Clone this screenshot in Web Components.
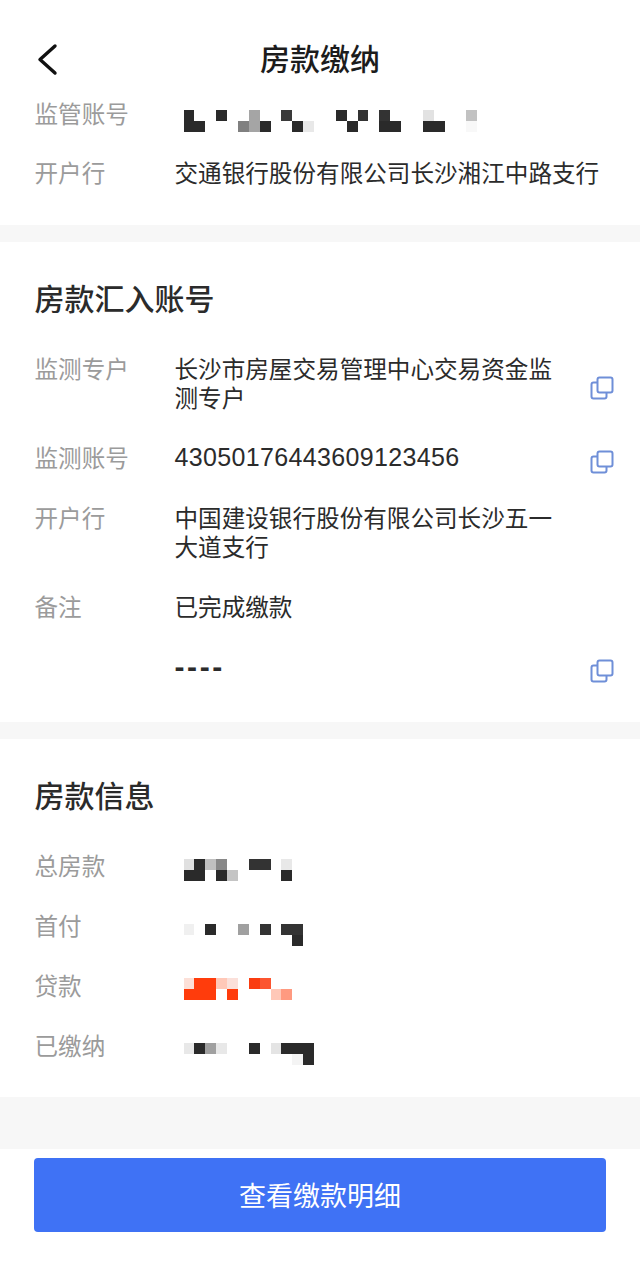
<!DOCTYPE html>
<html lang="zh">
<head>
<meta charset="utf-8">
<title>房款缴纳</title>
<style>
  html, body { margin: 0; background: #fff; }
  body {
    width: 640px;
    height: 1266px;
    overflow: hidden;
    font-family: "Noto Sans CJK SC", "Noto Sans", sans-serif;
    color: #2b2b2b;
  }
  .num { display: block; font: 25px/29px "Liberation Sans", sans-serif; letter-spacing: .35px; }
  .dashes { display: block; font: 700 30px/29px "Liberation Sans", sans-serif; letter-spacing: 2.6px; }
</style>
</head>
<body>
<pay-page>
  <nav-bar title="房款缴纳"></nav-bar>
  <info-section class="first">
    <info-row label="监管账号"><pixel-block data="0" offset="11.5"></pixel-block></info-row>
    <info-row label="开户行">交通银行股份有限公司长沙湘江中路支行</info-row>
  </info-section>
  <info-section heading="房款汇入账号">
    <info-row label="监测专户" copy>长沙市房屋交易管理中心交易资金监测专户</info-row>
    <info-row label="监测账号" copy><span class="num">43050176443609123456</span></info-row>
    <info-row label="开户行" narrow>中国建设银行股份有限公司长沙五一大道支行</info-row>
    <info-row label="备注">已完成缴款</info-row>
    <info-row copy><span class="dashes">----</span></info-row>
  </info-section>
  <info-section class="last" heading="房款信息">
    <info-row label="总房款"><pixel-block data="1" offset="8.5"></pixel-block></info-row>
    <info-row label="首付"><pixel-block data="2" offset="13.5"></pixel-block></info-row>
    <info-row label="贷款"><pixel-block data="3" offset="7.5"></pixel-block></info-row>
    <info-row label="已缴纳"><pixel-block data="4" offset="12.5"></pixel-block></info-row>
  </info-section>
  <pay-footer>查看缴款明细</pay-footer>
</pay-page>

<script>
// redacted values in the reference: [column, row, colour] on an 11px grid
const K = '#2a2a2a', R = '#ff3c0c';
const MOSAICS = [
  [[0,0,K],[0,1,K],[1,1,K],[3,0,K],[5,1,'#808080'],[6,0,'#a5a5a5'],[6,1,'#a5a5a5'],[7,1,K],
   [9,0,'#3a3a3a'],[10,1,K],[11,1,'#e8e8e8'],[14,0,K],[15,1,K],[16,0,'#333'],
   [18,0,'#333'],[18,1,K],[19,1,K],[22,0,'#e2e2e2'],[22,1,K],[23,1,K],[26,0,'#c2c2c2'],[26,1,'#f8f8f8']],
  [[0,0,'#e0e0e0'],[1,0,K],[2,0,'#c0c0c0'],[3,0,'#888'],[6,0,'#333'],[7,0,'#333'],[9,0,'#e8e8e8'],
   [0,1,K],[1,1,K],[3,1,K],[4,1,'#c4c4c4'],[9,1,K]],
  [[0,0,'#f0f0f0'],[2,0,K],[5,0,'#a0a0a0'],[7,0,'#333'],[9,0,'#333'],[10,0,'#333'],[10,1,K]],
  [[0,0,'#fce0d8'],[1,0,R],[2,0,R],[3,0,'#ffc8b8'],[4,0,'#fbe0da'],[6,0,'#fa3c10'],[7,0,'#fc5530'],
   [0,1,R],[1,1,R],[2,1,R],[4,1,R],[8,1,'#ffc8b8'],[9,1,'#ff9a80']],
  [[0,0,'#e8e8e8'],[1,0,K],[2,0,'#a0a0a0'],[3,0,'#e8e8e8'],[6,0,K],[8,0,'#e4e4e4'],[9,0,K],[10,0,K],[11,0,K],
   [10,1,'#f4f4f4'],[11,1,K]]
];

class PayPage extends HTMLElement {
  connectedCallback() {
    this.attachShadow({ mode: 'open' }).innerHTML = `
      <style>
        :host { display: flex; flex-direction: column; height: 1266px; }
        ::slotted(*) { flex: none; }
      </style>
      <slot></slot>`;
  }
}

class NavBar extends HTMLElement {
  connectedCallback() {
    this.attachShadow({ mode: 'open' }).innerHTML = `
      <style>
        :host { display: block; position: relative; height: 98.5px; box-sizing: border-box; padding-top: 36px; }
        h1 { margin: 0; font-size: 30px; line-height: 42px; font-weight: 500; text-align: center; color: #1c1c1c; }
        svg { position: absolute; left: 35px; top: 42px; }
      </style>
      <svg width="26" height="34" viewBox="0 0 26 34" fill="none" stroke="#111" stroke-width="3.4" stroke-linecap="round" stroke-linejoin="round">
        <path d="M20 4 5 17.5 20 31"/>
      </svg>
      <h1>${this.getAttribute('title')}</h1>`;
  }
}

class InfoSection extends HTMLElement {
  connectedCallback() {
    const heading = this.getAttribute('heading');
    this.attachShadow({ mode: 'open' }).innerHTML = `
      <style>
        :host { display: flex; flex-direction: column; gap: 31px; padding: 33.5px 26px 41.5px 34.5px; background: #fff; border-bottom: 17px solid #f7f7f7; }
        :host(.first) { gap: 30px; padding-top: 0; padding-bottom: 38.6px; }
        :host(.last) { padding-bottom: 37px; border-bottom-width: 52px; }
        h2 { margin: 0 0 5px; font-size: 30px; line-height: 42px; font-weight: 500; color: #2b2b2b; }
      </style>
      ${heading ? `<h2>${heading}</h2>` : ''}
      <slot></slot>`;
  }
}

const rowTemplate = document.createElement('template');
rowTemplate.innerHTML = `
<style>
  :host { display: flex; align-items: center; font-size: 23.6px; line-height: 29px; }
  :host([narrow]) .value { flex: none; width: 385px; }
  .label { flex: none; width: 140px; align-self: flex-start; color: #9b9b9b; }
  .value { flex: 1; min-width: 0; color: #2b2b2b; }
  svg { flex: none; margin: 5px 0 -5px 36px; }
</style>
<span class="label"></span>
<div class="value"><slot></slot></div>`;

class InfoRow extends HTMLElement {
  connectedCallback() {
    const root = this.attachShadow({ mode: 'open' });
    root.appendChild(rowTemplate.content.cloneNode(true));
    root.querySelector('.label').textContent = this.getAttribute('label') || '';
    if (this.hasAttribute('copy')) {
      root.appendChild(document.querySelector('#copy-icon').content.cloneNode(true));
    }
  }
}

class PixelBlock extends HTMLElement {
  connectedCallback() {
    const cells = MOSAICS[+this.getAttribute('data')];
    const html = cells.map(([c, r, color]) =>
      `<i style="grid-column:${c + 1};grid-row:${r + 1};background:${color}"></i>`).join('');
    this.attachShadow({ mode: 'open' }).innerHTML = `
      <style>
        :host { display: flow-root; height: 29px; margin-left: 9px; }
        div {
          display: grid; grid-auto-columns: 10.88px; grid-template-rows: 11px 11px;
          margin-top: ${this.getAttribute('offset')}px; filter: blur(.4px);
        }
      </style>
      <div>${html}</div>`;
  }
}

class PayFooter extends HTMLElement {
  connectedCallback() {
    this.attachShadow({ mode: 'open' }).innerHTML = `
      <style>
        :host { display: block; padding: 9px 34px 0; }
        button {
          display: block; width: 100%; height: 74px; border: 0; border-radius: 4px;
          background: #3f72f5; color: #fff; font: 400 27px "Noto Sans CJK SC", sans-serif;
        }
      </style>
      <button><slot></slot></button>`;
  }
}

const icon = document.createElement('template');
icon.id = 'copy-icon';
icon.innerHTML = `
<svg width="24" height="24" viewBox="0 0 24 24" fill="none" stroke="#6f8fd8" stroke-width="2" stroke-linejoin="round">
  <rect x="7.5" y="1.5" width="15" height="15" rx="2"/>
  <path d="M7.5 6.5H3.5a2 2 0 0 0-2 2v12a2 2 0 0 0 2 2h11a2 2 0 0 0 2-2v-4"/>
</svg>`;
document.head.appendChild(icon);

customElements.define('pay-page', PayPage);
customElements.define('nav-bar', NavBar);
customElements.define('info-section', InfoSection);
customElements.define('info-row', InfoRow);
customElements.define('pixel-block', PixelBlock);
customElements.define('pay-footer', PayFooter);
</script>
</body>
</html>
